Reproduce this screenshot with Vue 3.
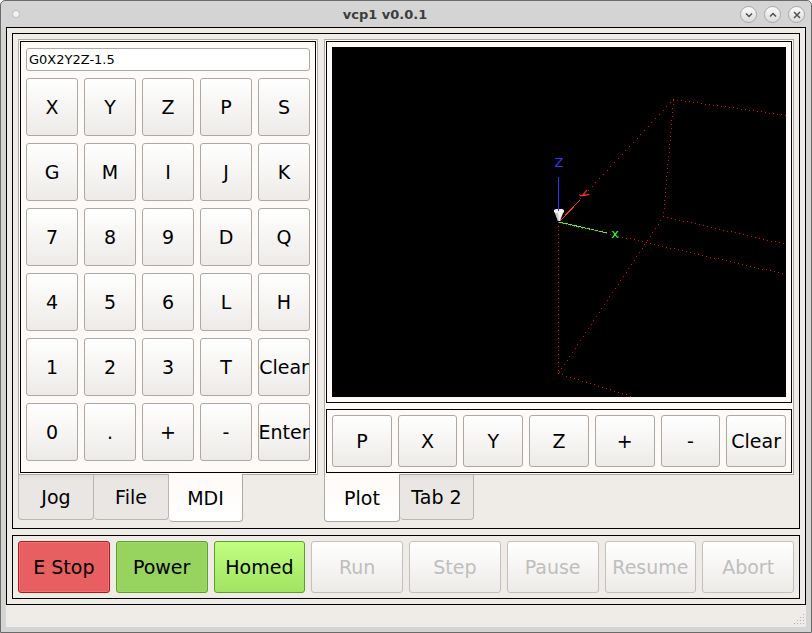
<template>
  <div class="window">
    <header class="titlebar">
      <span class="menu-dot"></span>
      <h1 class="title">vcp1 v0.0.1</h1>
      <div class="window-buttons">
        <button v-for="b in windowButtons" :key="b.name" class="win-btn" :aria-label="b.name">
          <svg width="10" height="10" viewBox="0 0 10 10">
            <path :d="b.path" fill="none" stroke="#505050" stroke-width="1.500" />
          </svg>
        </button>
      </div>
    </header>

    <main class="frame outer">
      <section class="frame work">
        <div class="notebook left">
          <div class="pane">
            <div class="frame mdi">
              <input v-model="mdi" class="entry" type="text" aria-label="MDI" />
              <div class="keypad">
                <button v-for="k in keys" :key="k" class="btn key" @click="press(k)">{{ k }}</button>
              </div>
            </div>
          </div>
          <nav class="tabs">
            <button
              v-for="t in leftTabs"
              :key="t"
              class="tab"
              :class="{ active: t === leftTab }"
              @click="leftTab = t"
            >{{ t }}</button>
          </nav>
        </div>

        <div class="notebook right">
          <div class="pane">
            <div class="frame plot">
              <svg class="scene" viewBox="0 0 454 350">
                <rect width="454" height="350" fill="#000" />
                <path :d="extents" stroke="#f00" shape-rendering="crispEdges" />
                <path d="M228 174L248 153" stroke="#ff3333" shape-rendering="crispEdges" />
                <path d="M227 175L275 186" stroke="#33ff33" shape-rendering="crispEdges" />
                <path :d="axisDots" stroke="#f00" shape-rendering="crispEdges" />
                <path d="M222 163l2-1h6l2 1v2l-1 1l-3 8h-2l-3-8l-1-1z" fill="#f0f0f0" />
                <path d="M223 166l3 8h1l-1-8z" fill="#c4c4c4" />
                <path d="M226.500 130V164" stroke="#3333ff" shape-rendering="crispEdges" />
                <text x="227" y="120" class="axis" fill="#3333ff">Z</text>
                <text x="283" y="191" class="axis" fill="#33ff33">x</text>
                <text x="253" y="150" class="axis small" fill="#ff3333" transform="rotate(60 253 147)">y</text>
              </svg>
            </div>
            <div class="frame row">
              <button v-for="v in views" :key="v" class="btn">{{ v }}</button>
            </div>
          </div>
          <nav class="tabs">
            <button
              v-for="t in rightTabs"
              :key="t"
              class="tab"
              :class="{ active: t === rightTab }"
              @click="rightTab = t"
            >{{ t }}</button>
          </nav>
        </div>
      </section>

      <section class="frame row">
        <button
          v-for="a in actions"
          :key="a.label"
          class="btn"
          :class="a.kind"
          :disabled="a.disabled"
        >{{ a.label }}</button>
      </section>
    </main>

    <footer class="statusbar">
      <svg class="grip" width="12" height="12" viewBox="0 0 12 12" shape-rendering="crispEdges">
        <path :d="grip" stroke="#b4b1ad" />
      </svg>
    </footer>
  </div>
</template>

<script setup>
import { ref } from 'vue'

const mdi = ref('G0X2Y2Z-1.5')
const leftTab = ref('MDI')
const rightTab = ref('Plot')

const leftTabs = ['Jog', 'File', 'MDI']
const rightTabs = ['Plot', 'Tab 2']

const keys = [
  'X', 'Y', 'Z', 'P', 'S',
  'G', 'M', 'I', 'J', 'K',
  '7', '8', '9', 'D', 'Q',
  '4', '5', '6', 'L', 'H',
  '1', '2', '3', 'T', 'Clear',
  '0', '.', '+', '-', 'Enter'
]
const views = ['P', 'X', 'Y', 'Z', '+', '-', 'Clear']

const actions = [
  { label: 'E Stop', kind: 'estop' },
  { label: 'Power', kind: 'power' },
  { label: 'Homed', kind: 'homed' },
  { label: 'Run', disabled: true },
  { label: 'Step', disabled: true },
  { label: 'Pause', disabled: true },
  { label: 'Resume', disabled: true },
  { label: 'Abort', disabled: true }
]

const windowButtons = [
  { name: 'Minimize', path: 'M2 3.500L5 6.500L8 3.500' },
  { name: 'Maximize', path: 'M2 6.500L5 3.500L8 6.500' },
  { name: 'Close', path: 'M2 2L8 8M8 2L2 8' }
]

const press = (key) => {
  if (key === 'Clear') mdi.value = ''
  else if (key !== 'Enter') mdi.value += key
}

// one pixel dot every `step` pixels along the longer axis
const dotted = (x1, y1, x2, y2, step = 4) => {
  const length = Math.max(Math.abs(x2 - x1), Math.abs(y2 - y1))
  let d = ''
  for (let i = 0; i <= length; i += step) {
    const x = Math.round(x1 + ((x2 - x1) * i) / length)
    const y = Math.round(y1 + ((y2 - y1) * i) / length)
    d += `M${x} ${y + 0.5}h1`
  }
  return d
}

// machine limits
const edges = [
  [226, 175, 341, 52],
  [341, 52, 454, 68],
  [341, 53, 331, 169],
  [331, 169, 454, 197],
  [226, 175, 454, 227],
  [226, 175, 226, 326],
  [331, 169, 226, 326],
  [226, 326, 302, 350]
]
const extents = edges.map((e) => dotted(...e)).join('')
const axisDots = dotted(226, 175, 274, 186)

const grip = [
  [9, 0], [6, 3], [9, 3], [3, 6], [6, 6], [9, 6], [0, 9], [3, 9], [6, 9], [9, 9]
].map(([x, y]) => `M${x} ${y + 0.5}h1`).join('')
</script>

<style>
body {
  margin: 0;
  background: #fff;
}
</style>

<style scoped>
* {
  box-sizing: border-box;
}

.window {
  display: flex;
  flex-direction: column;
  min-height: 100vh;
  padding: 0 5px 5px;
  border: 1px solid #6a6a6a;
  border-radius: 5px 5px 0 0;
  background: #d4d4d4;
  font-family: 'DejaVu Sans', sans-serif;
  font-size: 19px;
  color: #000;
}

button,
input {
  font: inherit;
  color: inherit;
}

/* title bar */
.titlebar {
  display: grid;
  grid-template-columns: 72px 1fr 72px;
  align-items: center;
  height: 26px;
}

.menu-dot {
  width: 8px;
  height: 8px;
  margin-left: 6px;
  border: 1px solid #bdbdbd;
  border-radius: 50%;
  background: #f4f4f4;
}

.title {
  margin: 0;
  padding: 2px 42px 0 0;
  text-align: center;
  font-size: 13px;
  line-height: 16px;
  color: #3c3c3c;
}

.window-buttons {
  display: flex;
  justify-content: flex-end;
  gap: 7px;
  padding: 1px 1px 0 0;
}

.win-btn {
  display: flex;
  flex: none;
  align-items: center;
  justify-content: center;
  width: 17px;
  height: 17px;
  padding: 0;
  border: 1px solid #a8a8a8;
  border-radius: 50%;
  background: linear-gradient(#fafafa, #dcdcdc);
}

.win-btn svg {
  flex: none;
}

/* frames */
.frame {
  padding: 5px;
  border: 1px solid #000;
}

.outer {
  display: flex;
  flex: 1;
  flex-direction: column;
  gap: 6px;
  background: #efebe7;
}

.work {
  display: flex;
  flex: 1;
  align-items: flex-start;
  gap: 6px;
}

.left {
  flex: 0 0 300px;
}

.right {
  flex: 1;
  min-width: 0;
}

.pane {
  display: flex;
  flex-direction: column;
  gap: 6px;
  padding: 1px;
  border: 1px solid #aca9a5;
  background: #fefaf7;
}

.mdi {
  padding: 6px 5px 11px;
}

.entry {
  display: block;
  width: 100%;
  height: 23px;
  margin-bottom: 7px;
  padding: 0 2px;
  border: 1px solid #aca9a5;
  border-radius: 3px;
  background: #fff;
  font-size: 13px;
}

.keypad {
  display: grid;
  grid-template-columns: repeat(5, minmax(0, 1fr));
  gap: 7px 6px;
}

.plot {
  display: flex;
}

.scene {
  display: block;
  width: 100%;
}

.axis {
  font-size: 13px;
  text-anchor: middle;
}

.axis.small {
  font-size: 12px;
}

.row {
  display: flex;
  gap: 6px;
}

/* buttons */
.btn {
  display: flex;
  flex: 1 1 0;
  align-items: center;
  justify-content: center;
  min-width: 0;
  height: 52px;
  padding: 0;
  border: 1px solid #aca9a5;
  border-radius: 3px;
  background: linear-gradient(#fff, #edebe8);
  white-space: nowrap;
}

.key {
  height: 58px;
}

.btn:disabled {
  border-color: #c2c0bd;
  color: #bebebe;
}

.estop {
  border-color: #b01c1c;
  background: #e85f61;
  box-shadow: inset 0 0 0 1px #ec7476;
}

.power {
  border-color: #5f9e27;
  background: #96d35f;
  box-shadow: inset 0 0 0 1px #a0d86e;
}

.homed {
  border-color: #5f9e27;
  background: linear-gradient(#c0ff80, #a2e362);
}

/* tabs */
.tabs {
  display: flex;
  align-items: flex-start;
}

.tab {
  width: 75px;
  height: 45px;
  padding: 0;
  border: 1px solid #b9b6b3;
  border-top: 0;
  border-radius: 0 0 4px 4px;
  background: linear-gradient(#dfdcda, #e9e6e3 6px);
}

.tab:first-child {
  width: 76px;
}

.tab + .tab {
  border-left: 0;
}

.tab:last-child {
  width: 74px;
}

.tab.active {
  position: relative;
  height: 48px;
  margin-top: -1px;
  border-color: #aca9a5;
  background: linear-gradient(#fefaf7, #fff);
}

/* status bar */
.statusbar {
  display: flex;
  align-items: flex-end;
  justify-content: flex-end;
  height: 22px;
  background: #efebe7;
}

.grip {
  margin-bottom: 1px;
}
</style>
